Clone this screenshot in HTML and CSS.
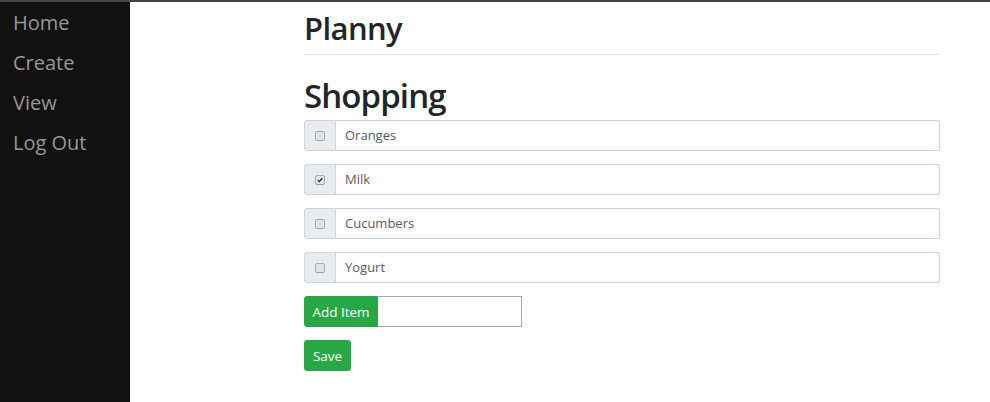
FILE: index.html
```html
<!DOCTYPE html>
<html lang="en">
<head>
<meta charset="utf-8">
<title>Planny</title>
<link rel="stylesheet" href="styles.css">
</head>
<body>
<div class="layout">
  <nav class="sidebar">
    <a class="nav-link" href="#">Home</a>
    <a class="nav-link" href="#">Create</a>
    <a class="nav-link" href="#">View</a>
    <a class="nav-link" href="#">Log Out</a>
  </nav>
  <main class="content">
    <h1 class="title">Planny</h1>
    <hr class="divider">
    <h2 class="list-title">Shopping</h2>
    <div class="item">
      <div class="addon"><span class="check"></span></div>
      <div class="field">Oranges</div>
    </div>
    <div class="item">
      <div class="addon"><span class="check checked"><svg viewBox="0 0 10 10" width="10" height="10"><path d="M2.2 5.2 L4.1 7.1 L7.9 2.8" fill="none" stroke="#222" stroke-width="1.6"/></svg></span></div>
      <div class="field">Milk</div>
    </div>
    <div class="item">
      <div class="addon"><span class="check"></span></div>
      <div class="field">Cucumbers</div>
    </div>
    <div class="item">
      <div class="addon"><span class="check"></span></div>
      <div class="field">Yogurt</div>
    </div>
    <div class="add-row">
      <button class="btn btn-add">Add Item</button>
      <div class="add-input"></div>
    </div>
    <div class="save-row">
      <button class="btn btn-save">Save</button>
    </div>
  </main>
</div>
</body>
</html>
```
FILE: styles.css
```css
* { box-sizing: border-box; }
html, body { margin: 0; padding: 0; }
body {
  font-family: "Open Sans", "Noto Sans", sans-serif;
  color: #212529;
  background: #fff;
  border-top: 2px solid #464646;
}
.layout {
  display: flex;
  min-height: 400px;
}
.sidebar {
  width: 130px;
  flex: none;
  background: #111111;
  padding: 1px 0 0 13px;
  display: flex;
  flex-direction: column;
}
.nav-link {
  color: #979797;
  text-decoration: none;
  font-size: 20px;
  line-height: 40px;
}
.content {
  padding-left: 174px;
  width: 810px;
}
.title {
  margin: 0;
  padding-top: 7px;
  font-size: 31px;
  font-weight: 600;
  letter-spacing: -0.6px;
  line-height: 38px;
}
.divider {
  margin: 7px 0 0 0;
  border: 0;
  border-top: 1px solid #e5e5e5;
  height: 0;
}
.list-title {
  margin: 21px 0 0 0;
  font-size: 33px;
  font-weight: 600;
  letter-spacing: -0.9px;
  line-height: 40px;
  padding-bottom: 4px;
}
.item {
  display: flex;
  height: 31px;
  margin-bottom: 13px;
}
.addon {
  width: 32px;
  flex: none;
  background: #e9ecef;
  border: 1px solid #ced4da;
  border-radius: 3px 0 0 3px;
  display: flex;
  align-items: center;
  justify-content: center;
}
.check {
  width: 10px;
  height: 10px;
  border: 1px solid #a8a8a8;
  border-radius: 2px;
  background: #e4e4e4;
  display: flex;
  align-items: center;
  justify-content: center;
}
.check svg { display: block; }
.field {
  flex: 1;
  border: 1px solid #ced4da;
  border-left: 0;
  border-radius: 0 3px 3px 0;
  font-size: 13px;
  line-height: 29px;
  padding-left: 9px;
  color: #555b61;
}
.add-row {
  display: flex;
  height: 31px;
  margin-bottom: 13px;
}
.btn {
  font-family: inherit;
  font-size: 13.5px;
  color: #fff;
  background: #28a745;
  border: 1px solid #28a745;
  height: 31px;
  padding: 0;
  white-space: nowrap;
  cursor: pointer;
}
.btn-add {
  border-radius: 3px 0 0 3px;
  width: 74px;
}
.add-input {
  width: 144px;
  border: 1px solid #aaaaaa;
  border-left: 0;
}
.btn-save {
  border-radius: 3px;
  width: 47px;
}
```
